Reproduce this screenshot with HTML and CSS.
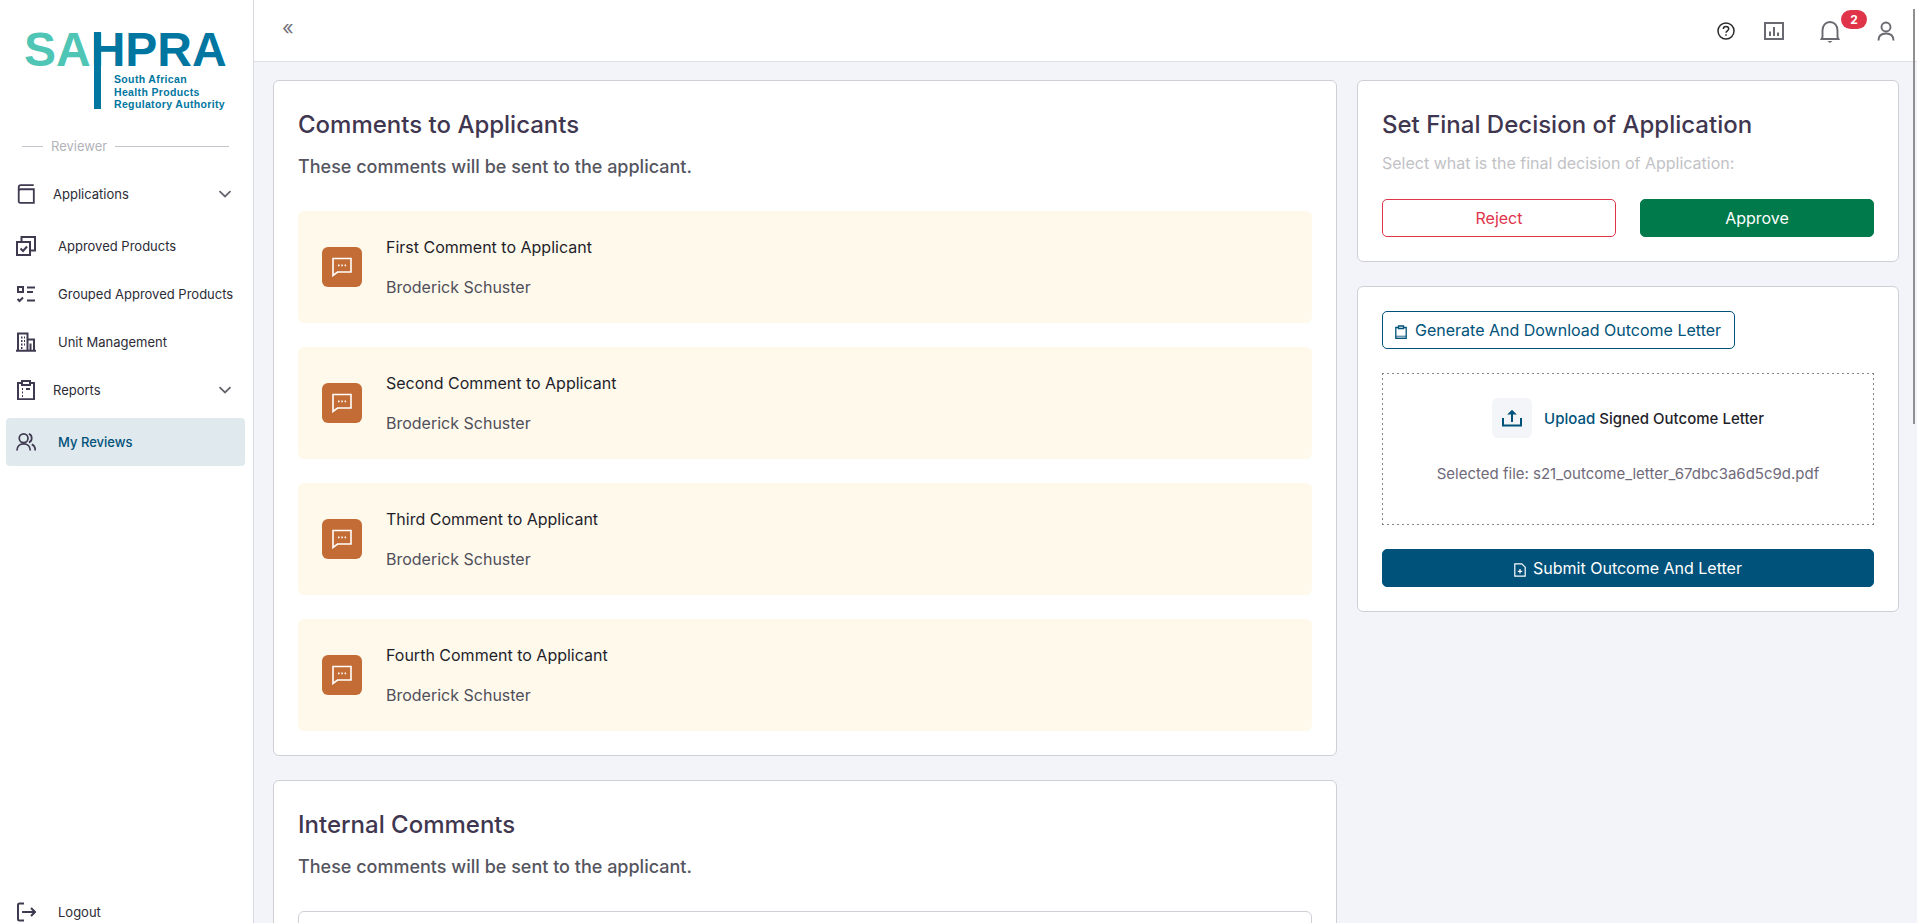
FILE: index.html
```html
<!DOCTYPE html>
<html lang="en">
<head>
<meta charset="utf-8">
<title>SAHPRA - My Reviews</title>
<link rel="stylesheet" href="styles.css">
</head>
<body>
<div class="app">
  <aside class="sidebar">
    <div class="logo">
      <div class="logo-word"><span class="logo-sa">SA</span><span class="logo-hpra">HPRA</span></div>
      <div class="logo-stem"></div>
      <div class="logo-sub">South African<br>Health Products<br>Regulatory Authority</div>
    </div>
    <div class="role"><span class="role-line short"></span><span class="role-text">Reviewer</span><span class="role-line"></span></div>
    <nav class="nav">
      <a class="nav-item group first">
        <svg class="nav-icon" viewBox="0 0 20 22" fill="none" stroke="#3f3a50" stroke-width="2"><path d="M2 8V3.500C2 2 3 1.200 4.200 1.200H18.500M2 19V8C2 6.500 3 5.800 4 5.800H18.600V20.800H3.800C2.700 20.800 2 20 2 19Z"/></svg>
        <span class="nav-label">Applications</span>
        <svg class="chev" viewBox="0 0 14 8" fill="none" stroke="#66666e" stroke-width="1.800"><path d="M1.500 1.200 7 6.500l5.500-5.300"/></svg>
      </a>
      <a class="nav-item leaf">
        <svg class="nav-icon" viewBox="0 0 20 20" fill="none" stroke="#3f3a50" stroke-width="2"><path d="M1 6h13v13H1zM5.500 6V1H19v13.500h-5M4.500 12.500l2.500 2.500 4-4.500"/></svg>
        <span class="nav-label">Approved Products</span>
      </a>
      <a class="nav-item leaf">
        <svg class="nav-icon" viewBox="0 0 20 20" fill="none" stroke="#3f3a50" stroke-width="2"><path d="M2 3h5v5H2zM11 3.500h8M11 8h6M11 16.500h8M1.500 15l2 2 3.500-3.500"/></svg>
        <span class="nav-label">Grouped Approved Products</span>
      </a>
      <a class="nav-item leaf">
        <svg class="nav-icon" viewBox="0 0 20 20" fill="none" stroke="#3f3a50" stroke-width="2"><path d="M0 18.700h20M2 18.700V1.500h9.500v17M11.500 7.500H18v11M5 5.500h1.500M8 5.500h1M5 9h1.500M8 9h1M5 12.500h1.500M8 12.500h1M5 16h1.500M14.500 11.500v7"/></svg>
        <span class="nav-label">Unit Management</span>
      </a>
      <a class="nav-item group">
        <svg class="nav-icon" viewBox="0 0 20 20" fill="none" stroke="#3f3a50" stroke-width="2"><path d="M6 3H2v16.200h16V3h-4M6 1h8v4H6zM6 9h1M10 9h4M6 12.500h1M6 16h1"/></svg>
        <span class="nav-label">Reports</span>
        <svg class="chev" viewBox="0 0 14 8" fill="none" stroke="#66666e" stroke-width="1.800"><path d="M1.500 1.200 7 6.500l5.500-5.300"/></svg>
      </a>
      <a class="nav-item leaf active">
        <svg class="nav-icon" viewBox="0 0 21 20" fill="none" stroke="#3f3a50" stroke-width="1.800"><circle cx="8" cy="6" r="4.600"/><path d="M1 19c0-4.500 3-7 7-7s7 2.500 7 7M13.500 1.500c2 .5 3 2.300 3 4.500 0 2-1 3.800-3 4.400M16.500 12.500c2.200.9 3.700 3.200 3.700 6.500"/></svg>
        <span class="nav-label">My Reviews</span>
      </a>
    </nav>
    <a class="nav-item leaf logout">
      <svg class="nav-icon" viewBox="0 0 20 20" fill="none" stroke="#3f3a50" stroke-width="2"><path d="M8 1.500H3.500C2.500 1.500 2 2 2 3v14c0 1 .5 1.500 1.500 1.500H8M6 10h13M15 6l4 4-4 4"/></svg>
      <span class="nav-label">Logout</span>
    </a>
  </aside>
  <div class="content">
    <header class="topbar">
      <span class="collapse">«</span>
      <div class="top-icons">
        <svg class="ti-help" viewBox="0 0 18 18" fill="none" stroke="#2a2a2a" stroke-width="1.500"><circle cx="9" cy="9" r="8"/><path d="M6.300 7c0-1.600 1.200-2.600 2.700-2.600S11.700 5.400 11.700 6.800c0 2-2.700 2-2.700 4"/><path d="M9 12.300v1.400"/></svg>
        <svg class="ti-chart" viewBox="0 0 20 18" fill="none" stroke="#6a6a72" stroke-width="2"><path d="M1 1h18v16H1zM6 14V9.500M10 14V5M14 14v-3.500"/></svg>
        <div class="bell-wrap">
          <svg class="ti-bell" viewBox="0 0 20 22" fill="none" stroke="#6a6a72" stroke-width="1.900"><path d="M1.500 18h17l-1-2V9.500C17.500 4.500 14.500 1 10 1S2.500 4.500 2.500 9.500V16Z"/><path d="M7.500 20h5L10 22Z" fill="#6a6a72" stroke="none"/></svg>
          <span class="badge">2</span>
        </div>
        <svg class="ti-user" viewBox="0 0 18 20" fill="none" stroke="#6a6a72" stroke-width="1.900"><circle cx="9" cy="6" r="4.500"/><path d="M1.500 19.500c0-4.500 3-7 7.500-7s7.500 2.500 7.500 7"/></svg>
      </div>
    </header>
    <main class="main">
      <div class="col-left">
        <section class="card">
          <h2 class="card-title">Comments to Applicants</h2>
          <p class="card-sub">These comments will be sent to the applicant.</p>
          <div class="comments">
            <div class="comment">
              <span class="comment-icon"><svg viewBox="0 0 20 20" fill="none" stroke="#fff" stroke-width="1.600"><path d="M1 1.500h18v13.500H5.500L1 18.500z"/><path d="M6 8.300h1.500M9.300 8.300h1.500M12.600 8.300h1.500" stroke-width="1.800"/></svg></span>
              <div class="comment-body"><div class="comment-title">First Comment to Applicant</div><div class="comment-name">Broderick Schuster</div></div>
            </div>
            <div class="comment">
              <span class="comment-icon"><svg viewBox="0 0 20 20" fill="none" stroke="#fff" stroke-width="1.600"><path d="M1 1.500h18v13.500H5.500L1 18.500z"/><path d="M6 8.300h1.500M9.300 8.300h1.500M12.600 8.300h1.500" stroke-width="1.800"/></svg></span>
              <div class="comment-body"><div class="comment-title">Second Comment to Applicant</div><div class="comment-name">Broderick Schuster</div></div>
            </div>
            <div class="comment">
              <span class="comment-icon"><svg viewBox="0 0 20 20" fill="none" stroke="#fff" stroke-width="1.600"><path d="M1 1.500h18v13.500H5.500L1 18.500z"/><path d="M6 8.300h1.500M9.300 8.300h1.500M12.600 8.300h1.500" stroke-width="1.800"/></svg></span>
              <div class="comment-body"><div class="comment-title">Third Comment to Applicant</div><div class="comment-name">Broderick Schuster</div></div>
            </div>
            <div class="comment">
              <span class="comment-icon"><svg viewBox="0 0 20 20" fill="none" stroke="#fff" stroke-width="1.600"><path d="M1 1.500h18v13.500H5.500L1 18.500z"/><path d="M6 8.300h1.500M9.300 8.300h1.500M12.600 8.300h1.500" stroke-width="1.800"/></svg></span>
              <div class="comment-body"><div class="comment-title">Fourth Comment to Applicant</div><div class="comment-name">Broderick Schuster</div></div>
            </div>
          </div>
        </section>
        <section class="card">
          <h2 class="card-title">Internal Comments</h2>
          <p class="card-sub">These comments will be sent to the applicant.</p>
          <div class="internal-box"></div>
        </section>
      </div>
      <div class="col-right">
        <section class="card card-decision">
          <h2 class="card-title">Set Final Decision of Application</h2>
          <p class="decision-sub">Select what is the final decision of Application:</p>
          <div class="decision-actions">
            <button class="btn btn-reject">Reject</button>
            <button class="btn btn-approve">Approve</button>
          </div>
        </section>
        <section class="card card-upload">
          <button class="btn btn-generate">
            <svg viewBox="0 0 12 14" fill="none" stroke="#00527a" stroke-width="1.300"><path d="M3.500 2.500H.8v10.800h10.400V2.500H8.500"/><path d="M3.500 1h5v2.500h-5z"/><path d="M.8 11.500h10.400" stroke-width="1.800" opacity=".6"/></svg>
            Generate And Download Outcome Letter
          </button>
          <div class="dropzone">
            <div class="drop-row">
              <span class="drop-icon"><svg viewBox="0 0 20 18" fill="none" stroke="#00527a" stroke-width="2"><path d="M1 9v7.500h18V9M10 13V2.500"/><path d="M5.800 5.500 10 1.300l4.200 4.200" fill="#00527a" stroke-width="1"/></svg></span>
              <span class="drop-text"><span class="drop-link">Upload</span> Signed Outcome Letter</span>
            </div>
            <div class="drop-file">Selected file: s21_outcome_letter_67dbc3a6d5c9d.pdf</div>
          </div>
          <button class="btn btn-submit">
            <svg viewBox="0 0 12 14" fill="none" stroke="#fff" stroke-width="1.200"><path d="M.8.800h7l3.400 3.400v9H.8z"/><path d="M6 6v4.500M3.800 8.300h4.400"/></svg>
            Submit Outcome And Letter
          </button>
        </section>
      </div>
    </main>
  </div>
</div>
<div class="scroll-thumb"></div>
</body>
</html>
```
FILE: styles.css
```css
* { box-sizing: border-box; }
html, body { margin: 0; height: 100%; overflow: hidden; }
body { font-family: Inter, "Liberation Sans", sans-serif; background: #f3f4fa; color: #3f3a50; }
.app { display: flex; height: 923px; }

.sidebar { width: 254px; flex: none; background: #fff; border-right: 1px solid #d9dae0; display: flex; flex-direction: column; padding-top: 32px; position: relative; }
.logo { position: relative; height: 78px; margin-left: 24px; width: 204px; }
.logo-word { font-family: "Liberation Sans", Arial, sans-serif; font-weight: 700; font-size: 48px; line-height: 36px; height: 36px; white-space: nowrap; }
.logo-sa { color: #4fc5b5; }
.logo-hpra { color: #0076a0; }
.logo-stem { position: absolute; left: 70px; top: 0; width: 7px; height: 77px; background: #0076a0; }
.logo-sub { position: absolute; left: 90px; top: 41px; font-family: "Liberation Sans", Arial, sans-serif; font-weight: 700; font-size: 10.500px; line-height: 12.700px; letter-spacing: .35px; color: #0076a0; white-space: nowrap; }

.role { display: flex; align-items: center; gap: 8px; margin: 26px 24px 0 22px; height: 20px; }
.role-line { flex: 1; height: 1px; background: #c4c4ca; }
.role-line.short { flex: none; width: 21px; }
.role-text { font-size: 13px; color: #b3b3ba; }

.nav { display: flex; flex-direction: column; margin-top: 14px; }
.nav-item { display: flex; align-items: center; height: 48px; margin: 0 8px 0 6px; font-size: 13px; font-weight: 400; color: #2c2c36; border-radius: 4px; }
.nav-item.first { margin-bottom: 4px; }
.nav-icon { width: 20px; height: 20px; flex: none; margin-left: 10px; }
.nav-item.leaf .nav-label { margin-left: 22px; }
.nav-item.group .nav-label { margin-left: 17px; flex: 1; }
.nav-item.active { background: #e0e9ee; color: #00527a; font-weight: 500; margin-top: 4px; }
.chev { width: 14px; height: 8px; margin-right: 13px; }
.logout { position: absolute; left: 0; right: 0; top: 888px; }

.content { flex: 1; min-width: 0; display: flex; flex-direction: column; }
.topbar { height: 62px; flex: none; background: #fff; border-bottom: 1px solid #dfe0e6; display: flex; align-items: center; padding: 0 22px 0 28px; }
.collapse { font-size: 20px; color: #74747c; line-height: 1; margin-top: -6px; }
.top-icons { margin-left: auto; display: flex; align-items: center; }
.ti-help { width: 18px; height: 18px; }
.ti-chart { width: 20px; height: 18px; margin-left: 29px; }
.bell-wrap { position: relative; margin-left: 36px; width: 20px; height: 22px; margin-top: 2px; }
.ti-bell { width: 20px; height: 22px; display: block; }
.badge { position: absolute; left: 21px; top: -11px; width: 26px; height: 19px; border-radius: 10px; background: #e0344a; color: #fff; font-size: 12px; font-weight: 700; display: flex; align-items: center; justify-content: center; }
.ti-user { width: 18px; height: 20px; margin-left: 37px; }

.main { flex: 1; display: flex; gap: 20px; padding: 18px 18px 0 19px; align-items: flex-start; min-height: 0; overflow: hidden; }
.col-left { width: 1064px; flex: none; display: flex; flex-direction: column; gap: 24px; }
.col-right { width: 542px; flex: none; display: flex; flex-direction: column; gap: 24px; }
.card { background: #fff; border: 1px solid #cfd0d6; border-radius: 6px; padding: 24px; }
.card-title { margin: 0; font-size: 24px; font-weight: 500; line-height: 40px; color: #3f3650; }
.card-sub { margin: 10px 0 0; font-size: 18px; font-weight: 500; line-height: 24px; color: #55555f; }
.comments { margin-top: 32px; display: flex; flex-direction: column; gap: 24px; }
.comment { height: 112px; background: #fff9ec; border-radius: 6px; display: flex; align-items: center; padding-left: 24px; gap: 24px; }
.comment-icon { width: 40px; height: 40px; border-radius: 6px; background: #c46c35; display: flex; align-items: center; justify-content: center; }
.comment-icon svg { width: 20px; height: 20px; }
.comment-body { display: flex; flex-direction: column; gap: 16px; }
.comment-title { font-size: 16px; line-height: 24px; color: #1f1f2b; }
.comment-name { font-size: 16px; line-height: 24px; color: #4f4f5a; }
.internal-box { margin-top: 32px; height: 200px; border: 1px solid #cfd0d6; border-radius: 6px; }

.decision-sub { margin: 6px 0 0; font-size: 16px; line-height: 24px; color: #c2c2c6; }
.decision-actions { display: flex; gap: 24px; margin-top: 24px; }
.btn { font-family: inherit; font-size: 16px; height: 38px; border-radius: 5px; display: flex; align-items: center; justify-content: center; cursor: pointer; }
.btn-reject { flex: 1; background: #fff; border: 1px solid #e0344a; color: #e0344a; }
.btn-approve { flex: 1; background: #007a4b; border: 1px solid #007a4b; color: #fff; }
.btn-generate { background: #fff; border: 1px solid #00527a; color: #00527a; padding: 0 13px 0 12px; gap: 8px; }
.btn-generate svg, .btn-submit svg { width: 12px; height: 14px; margin-top: 3px; }
.btn-submit { width: 100%; background: #00527a; border: 1px solid #00527a; color: #fff; gap: 7px; }
.dropzone {
  margin: 24px 0; height: 152px; display: flex; flex-direction: column; align-items: center; padding-top: 25px;
  background-image:
    repeating-linear-gradient(90deg, #85858d 0 2px, transparent 2px 5px),
    repeating-linear-gradient(90deg, #85858d 0 2px, transparent 2px 5px),
    repeating-linear-gradient(0deg, #85858d 0 2px, transparent 2px 5px),
    repeating-linear-gradient(0deg, #85858d 0 2px, transparent 2px 5px);
  background-size: 100% 1px, 100% 1px, 1px 100%, 1px 100%;
  background-position: 0 0, 0 100%, 0 0, 100% 0;
  background-repeat: no-repeat;
}
.drop-row { display: flex; align-items: center; gap: 12px; }
.drop-icon { width: 40px; height: 40px; border-radius: 6px; background: #f3f5f9; display: flex; align-items: center; justify-content: center; }
.drop-icon svg { width: 20px; height: 18px; }
.drop-text { font-size: 15px; font-weight: 500; color: #1f1f2b; }
.drop-link { color: #00527a; }
.drop-file { margin-top: 25px; font-size: 15px; line-height: 22px; color: #6f6a7a; }

.scroll-thumb { position: fixed; right: 2px; top: 9px; width: 2px; height: 415px; background: #8f8f8f; }
```
